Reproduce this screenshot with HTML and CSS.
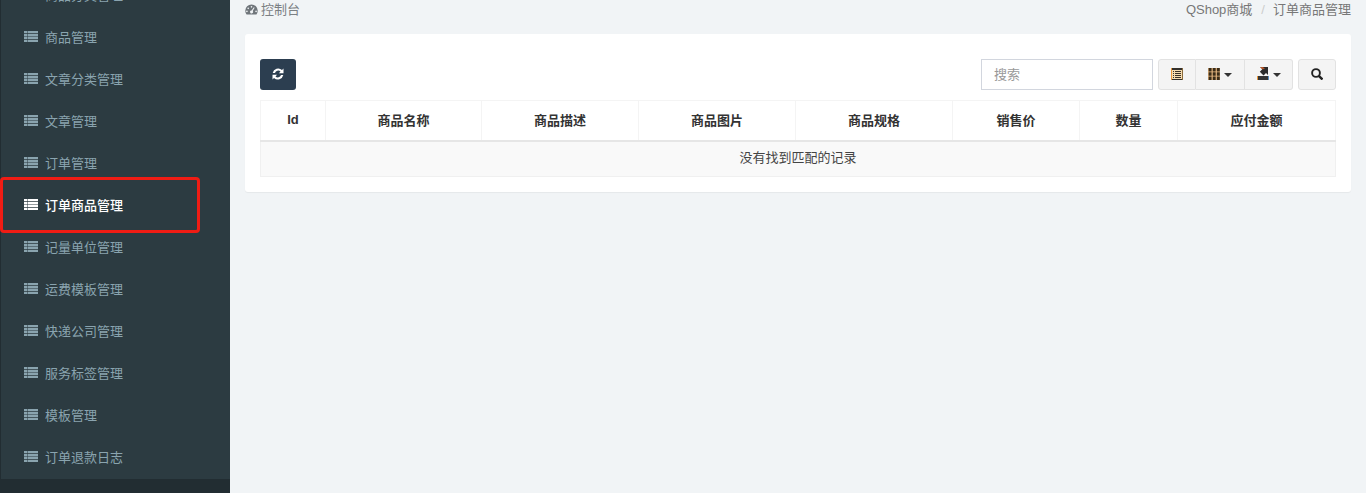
FILE: index.html
```html
<!DOCTYPE html>
<html lang="zh-CN">
<head>
<meta charset="utf-8">
<title>订单商品管理</title>
<link rel="stylesheet" href="styles.css">
</head>
<body>
<svg class="sprite" width="0" height="0">
  <symbol id="list" viewBox="0 0 14 11"><path d="M0 0h3.300v2.300H0zM3.800 0H14v2.300H3.800zM0 2.900h3.300v2.300H0zM3.800 2.900H14v2.300H3.800zM0 5.800h3.300v2.300H0zM3.800 5.800H14v2.300H3.800zM0 8.700h3.300V11H0zM3.800 8.700H14V11H3.800z"/></symbol>
</svg>
<div class="app">
  <aside class="sidebar">
    <ul class="menu">
      <li class="item"><svg class="ico"><use href="#list"/></svg>商品分类管理</li>
      <li class="item"><svg class="ico"><use href="#list"/></svg>商品管理</li>
      <li class="item"><svg class="ico"><use href="#list"/></svg>文章分类管理</li>
      <li class="item"><svg class="ico"><use href="#list"/></svg>文章管理</li>
      <li class="item"><svg class="ico"><use href="#list"/></svg>订单管理</li>
      <li class="item active"><svg class="ico"><use href="#list"/></svg>订单商品管理</li>
      <li class="item"><svg class="ico"><use href="#list"/></svg>记量单位管理</li>
      <li class="item"><svg class="ico"><use href="#list"/></svg>运费模板管理</li>
      <li class="item"><svg class="ico"><use href="#list"/></svg>快递公司管理</li>
      <li class="item"><svg class="ico"><use href="#list"/></svg>服务标签管理</li>
      <li class="item"><svg class="ico"><use href="#list"/></svg>模板管理</li>
      <li class="item"><svg class="ico"><use href="#list"/></svg>订单退款日志</li>
    </ul>
  </aside>
  <main class="content">
    <div class="crumbs">
      <span class="home">
        <svg class="gauge" viewBox="0 0 14 12"><path fill-rule="evenodd" d="M7 0.500a6.800 6.800 0 0 1 6.800 6.800c0 1.600-.5 3-1.400 4.200H1.600A6.800 6.800 0 0 1 .2 7.300 6.800 6.800 0 0 1 7 .5zM7 2.200a.9.9 0 1 0 0 1.800.9.9 0 0 0 0-1.800zM3.400 3.800a.9.9 0 1 0 0 1.800.9.9 0 0 0 0-1.800zM2 7.200a.9.9 0 1 0 0 1.800.9.9 0 0 0 0-1.800zM12 7.200a.9.9 0 1 0 0 1.800.9.9 0 0 0 0-1.800zM9.600 3.600L7.100 7a1.600 1.600 0 1 0 1.200.6L10.400 4z"/></svg>控制台</span>
      <span class="trail"><span>QShop商城</span><span class="sep">/</span><span>订单商品管理</span></span>
    </div>
    <section class="panel">
      <div class="toolbar">
        <button class="btn-refresh" type="button" aria-label="刷新">
          <svg viewBox="0 0 12 12" width="12" height="12"><path fill="#fff" d="M11.500 .6v4.600H6.900l1.600-1.600A3.300 3.300 0 0 0 3 4.900H.7A5.600 5.600 0 0 1 10 2zM.5 11.400V6.800h4.600L3.500 8.400A3.300 3.300 0 0 0 9 7.100h2.300A5.600 5.600 0 0 1 2 10z"/></svg>
        </button>
        <div class="tools">
          <input class="search" type="text" placeholder="搜索">
          <div class="group">
            <button class="tool t-first" type="button" aria-label="切换">
              <svg viewBox="0 0 12 12" width="12" height="12"><path fill="#e8973a" d="M0 0h1.200v12H0z"/><path fill="#8a6a3a" d="M11 0h1v12h-1z"/><path fill="#33302c" d="M1 0h10v2H1zM1 11h10v1H1z"/><path fill="#f6dcb0" d="M1 2h10v9H1z"/><path fill="#3a3026" d="M2 3h1v1H2zM4 3h6v1H4zM2 5h1v1H2zM4 5h6v1H4zM2 7h1v1H2zM4 7h6v1H4zM2 9h1v1H2zM4 9h6v1H4z"/></svg>
            </button>
            <button class="tool t-mid" type="button" aria-label="列">
              <svg viewBox="0 0 12 12" width="12" height="12"><path fill="#e8973a" d="M0 0h12v12H0z" opacity=".6"/><path fill="#3a2c18" d="M.6 0h3v3.400h-3zM4.700 0h3v3.400h-3zM8.800 0h3v3.400h-3zM.6 4.300h3v3.400h-3zM4.700 4.300h3v3.400h-3zM8.800 4.300h3v3.400h-3zM.6 8.600h3V12h-3zM4.700 8.600h3V12h-3zM8.800 8.600h3V12h-3z"/></svg><i class="caret"></i>
            </button>
            <button class="tool t-last" type="button" aria-label="导出">
              <svg viewBox="0 0 12 13" width="12" height="13"><path fill="#e8973a" d="M0 9h1v4H0z"/><path fill="#5b8fc0" d="M11 9h1v4h-1z"/><path fill="#333" d="M1 9h10v4H1z"/><path fill="#2b2b2b" d="M3 0h8v8L9 6 6.500 8.500 2.800 4.800 5.300 2.300z"/><path fill="#d9622b" d="M3 0h3l2 2-2.700.3z" opacity=".8"/></svg><i class="caret"></i>
            </button>
          </div>
          <button class="tool t-search" type="button" aria-label="搜索">
            <svg viewBox="0 0 12 12" width="12" height="12"><circle cx="5" cy="5" r="3.900" fill="none" stroke="#222" stroke-width="1.900"/><path stroke="#222" stroke-width="2.400" d="M7.800 7.800l3.700 3.700"/></svg>
          </button>
        </div>
      </div>
      <table class="grid">
        <colgroup>
          <col class="c1"><col class="c2"><col class="c3"><col class="c4"><col class="c5"><col class="c6"><col class="c7"><col class="c8">
        </colgroup>
        <thead>
          <tr><th>Id</th><th>商品名称</th><th>商品描述</th><th>商品图片</th><th>商品规格</th><th>销售价</th><th>数量</th><th>应付金额</th></tr>
        </thead>
        <tbody>
          <tr><td colspan="8">没有找到匹配的记录</td></tr>
        </tbody>
      </table>
    </section>
  </main>
</div>
<div class="highlight"></div>
</body>
</html>
```
FILE: styles.css
```css
* { box-sizing: border-box; }
html, body { margin: 0; height: 493px; overflow: hidden; }
body {
  font-family: "Liberation Sans", "Noto Sans CJK SC", sans-serif;
  font-size: 13px;
  color: #444c54;
  background: #f1f4f6;
  position: relative;
}
.sprite { position: absolute; }
.app { display: flex; height: 493px; }
.sidebar { width: 230px; flex: none; background: #222d32; height: 493px; overflow: hidden; }
.menu {
  list-style: none;
  margin: -26px 0 0;
  padding: 0 0 1px;
  background: #2c3b41;
  border-left: 1px solid #222d32;
}
.item {
  height: 42px;
  display: flex;
  align-items: center;
  padding: 2px 0 0 23px;
  color: #8aa4af;
  line-height: 40px;
}
.item.active { color: #fff; font-weight: 500; }
.ico { width: 14px; height: 11px; margin: 0 7px 3px 0; fill: currentColor; }
.content { flex: 1; padding: 0 15px; min-width: 0; }
.crumbs { display: flex; justify-content: space-between; height: 34px; padding-top: 2px; line-height: 15px; color: #777; }
.home { display: flex; align-items: center; height: 15px; color: #7b8084; }
.gauge { width: 13px; height: 11px; margin-right: 3px; fill: #6f757a; }
.trail { color: #777; }
.sep { color: #ccc; margin: 0 8px 0 9px; }
.panel { background: #fff; height: 158px; border-radius: 3px; padding: 25px 15px 15px; box-shadow: 0 1px 1px rgba(0, 0, 0, .05); }
.toolbar { display: flex; justify-content: space-between; height: 41px; align-items: flex-start; }
.btn-refresh { width: 36px; height: 31px; background: #2c3e50; border: 0; border-radius: 3px; padding: 0 0 2px; display: flex; align-items: center; justify-content: center; }
.tools { display: flex; }
.search { width: 172px; height: 31px; border: 1px solid #d2d6de; padding: 0 12px; font: inherit; color: #444; margin-right: 5px; outline: 0; }
.search::placeholder { color: #999; }
.group { display: flex; margin-right: 5px; }
.tool { height: 31px; background: #f4f4f4; border: 1px solid #e2e2e2; padding: 0 0 2px; display: flex; align-items: center; justify-content: center; }
.t-first { width: 38px; border-radius: 3px 0 0 3px; }
.t-mid { width: 49px; border-left: 0; gap: 4px; }
.t-last { width: 48px; border-left: 0; border-radius: 0 3px 3px 0; gap: 4px; }
.t-search { width: 38px; border-radius: 3px; }
.caret { width: 0; height: 0; border-left: 4px solid transparent; border-right: 4px solid transparent; border-top: 4px solid #333; margin-top: 2px; }
.grid { width: 1075px; border-collapse: collapse; table-layout: fixed; border: 1px solid #f4f4f4; }
.c1 { width: 65px; } .c2 { width: 156px; } .c3 { width: 157px; } .c4 { width: 157px; } .c5 { width: 157px; } .c6 { width: 127px; } .c7 { width: 98px; } .c8 { width: 158px; }
th { height: 40px; border: 1px solid #f4f4f4; border-bottom: 2px solid #e6e6e6; font-weight: 700; color: #333; text-align: center; padding: 0 0 2px; }
td { height: 36px; background: #f9f9f9; border: 1px solid #f0f0f0; text-align: center; color: #444; padding: 0 0 4px; }
.highlight { position: absolute; left: 0; top: 177px; width: 200px; height: 56px; border: 3px solid #f01c14; border-radius: 4px; pointer-events: none; }
```
